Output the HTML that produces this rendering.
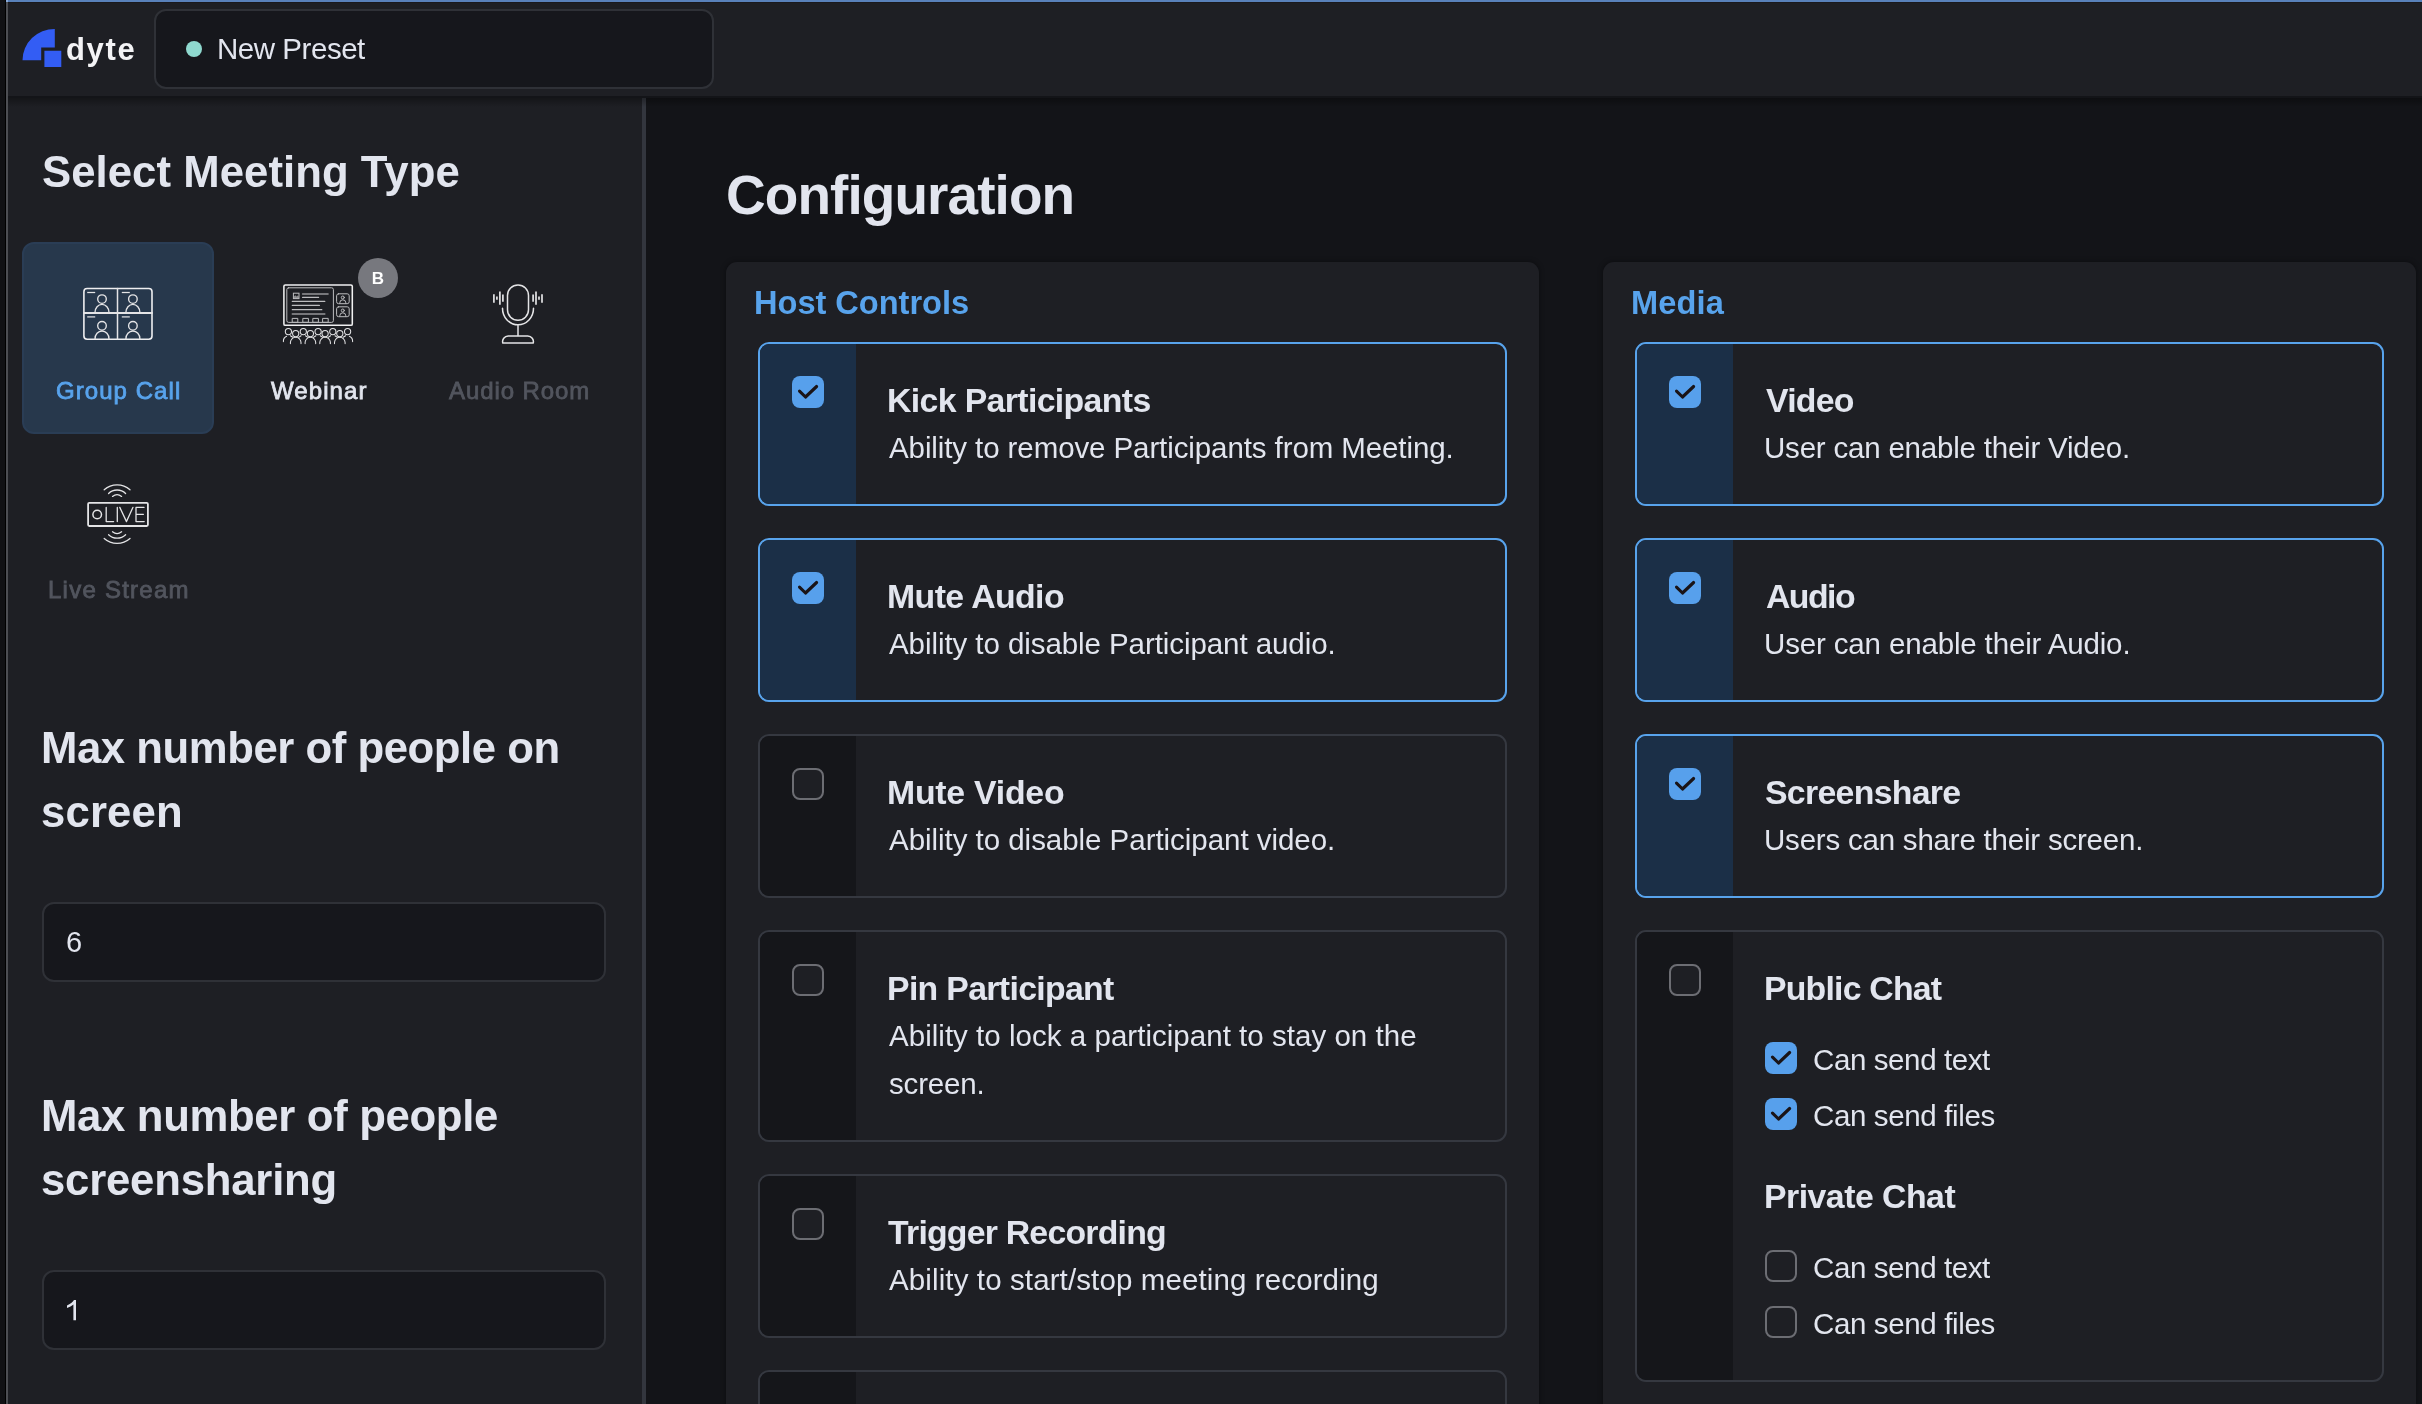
<!DOCTYPE html>
<html lang="en"><head><meta charset="utf-8"><title>New Preset</title>
<style>

html,body{margin:0;padding:0;width:2422px;height:1404px;overflow:hidden;}
#root{position:absolute;left:0;top:0;width:2422px;height:1404px;overflow:hidden;background:#131418;}
body{width:2422px;height:1404px;overflow:hidden;position:relative;background:#131418;font-family:"Liberation Sans",sans-serif;}
.a{position:absolute;box-sizing:border-box;}
.t{position:absolute;white-space:nowrap;font-family:"Liberation Sans",sans-serif;will-change:transform;}
.card{position:absolute;box-sizing:border-box;border:2px solid #353840;border-radius:11px;overflow:hidden;background:#1e1f24;}
.card.on{border-color:#58a3ec;}
.card .s{position:absolute;left:0;top:0;bottom:0;width:96px;background:#15161a;}
.card.on .s{background:#1b2f47;}
.cb{position:absolute;box-sizing:border-box;width:32px;height:32px;border-radius:8px;border:2px solid #6c6d73;background:#1e1f24;}
.cb.on{border:0;background:#57a0ec;}
.cb svg{position:absolute;left:0;top:0;display:block;}
.inp{position:absolute;box-sizing:border-box;border:2px solid #2f3137;border-radius:12px;background:#16171c;}

</style></head>
<body>
<div id="root">
<div class="a" style="left:8px;top:98px;width:634px;height:1306px;background:#1e1f24;"></div>
<div class="a" style="left:642px;top:98px;width:4px;height:1306px;background:#33363e;"></div>
<div class="a" style="left:726px;top:262px;width:813px;height:1200px;background:#1e1f24;border-radius:11px;box-shadow:0 0 5px 1px rgba(0,0,0,.3);"></div>
<div class="a" style="left:1602.5px;top:262px;width:813.5px;height:1200px;background:#1e1f24;border-radius:11px;box-shadow:0 0 5px 1px rgba(0,0,0,.3);"></div>
<div class="a" style="left:8px;top:0px;width:2414px;height:96px;background:#1e1f24;"></div>
<div class="a" style="left:8px;top:98px;width:2414px;height:9px;background:linear-gradient(rgba(0,0,0,.32),rgba(0,0,0,0));"></div>
<div class="a" style="left:6px;top:0px;width:2416px;height:2px;background:#5981ba;"></div>
<div class="a" style="left:8px;top:2px;width:2414px;height:1px;background:#1a191d;"></div>
<div class="a" style="left:6px;top:0px;width:2px;height:2px;background:#8aaad9;"></div>
<div class="a" style="left:0px;top:0px;width:5px;height:1404px;background:#111114;"></div>
<div class="a" style="left:5px;top:0px;width:1px;height:1404px;background:#000;"></div>
<div class="a" style="left:6px;top:2px;width:2px;height:1402px;background:#4d4e53;"></div>
<div class="inp" style="left:154px;top:9px;width:560px;height:80px"></div>
<div class="a" style="left:186px;top:41px;width:16px;height:16px;background:#8fd9cf;border-radius:50%;"></div>
<svg class="a" style="left:20px;top:26px" width="46" height="44" viewBox="20 26 46 44"><path fill="#335df4" d="M22.5 60.3A32.3 31.4 0 0 1 54.8 28.9V47.5H41.2V60.3zM44.4 50.7h16.9v16.4H44.4z"/></svg>
<div class="a" style="left:22px;top:242px;width:192px;height:192px;background:#27384c;border-radius:12px;border:2px solid #2a3d55;"></div>
<svg class="a" style="left:0;top:0" width="660" height="700" viewBox="0 0 660 700" fill="none" stroke="#e4e4e6" stroke-width="1.35" stroke-linecap="round" stroke-linejoin="round">
<rect x="83.9" y="288.5" width="68.1" height="50.8" rx="3.2" stroke-width="1.6" stroke="#eeeef0"/>
<path d="M117.5 288.5V339.3" stroke-width="1.5"/><path d="M84 313H152" stroke-width="1.9"/>
<circle cx="102.00" cy="299.10" r="4.3"/><path d="M95.00 312.60A7.00 8.20 0 0 1 109.00 312.60"/>
<circle cx="102.00" cy="325.80" r="4.3"/><path d="M95.00 338.90A7.00 7.90 0 0 1 109.00 338.90"/>
<circle cx="132.90" cy="299.10" r="4.3"/><path d="M125.90 312.60A7.00 8.20 0 0 1 139.90 312.60"/>
<circle cx="132.90" cy="325.80" r="4.3"/><path d="M125.90 338.90A7.00 7.90 0 0 1 139.90 338.90"/>
<path d="M87.2 292.5h8" stroke-width="1.25" stroke-linecap="butt"/>
<path d="M87.2 316.9h8" stroke-width="1.25" stroke-linecap="butt"/>
<path d="M121.8 292.5h8" stroke-width="1.25" stroke-linecap="butt"/>
<path d="M121.8 316.9h8" stroke-width="1.25" stroke-linecap="butt"/>
<rect x="283.9" y="284.9" width="68.4" height="40.4" rx="1.4" stroke-width="1.55" stroke="#f0f0f1"/>
<g stroke-width="1" opacity="0.8">
<rect x="286.8" y="287.8" width="46.6" height="34.6" rx="1.8"/>
<rect x="293.4" y="293.2" width="5.6" height="5.4" stroke-linejoin="miter"/><path d="M293.6 298.4v-1.6l1.7-1.6 1.3 1.2 1-.8 1.2 1.2v1.6z" fill="#e4e4e6" fill-opacity=".7" stroke="none"/>
<path d="M302.6 294H328" stroke-width="1.6" opacity=".75"/>
<path d="M302.6 297.4H318.6M292.3 301.4H324.8M292.3 305.4H319.4M292.3 309.7H321.8" stroke-width="1.2"/>
<path d="M292.3 314.1H324.8" stroke-width="1.5" opacity=".75"/>
<rect x="292.6" y="318.4" width="5.2" height="3.9"/>
<rect x="303.2" y="318.4" width="5.2" height="3.9"/>
<rect x="313.2" y="318.4" width="5.2" height="3.9"/>
<rect x="323.0" y="318.4" width="5.2" height="3.9"/>
<rect x="336.6" y="293.8" width="12.6" height="9.9" rx="2"/>
<circle cx="342.8" cy="297.5" r="1.5"/><path d="M339.8 303.2v-.4a3 3 0 0 1 6 0v.4"/>
<rect x="336.6" y="306.8" width="12.6" height="9.9" rx="2"/>
<circle cx="342.8" cy="310.5" r="1.5"/><path d="M339.8 316.2v-.4a3 3 0 0 1 6 0v.4"/>
</g>
<g stroke-width="1.05">
<circle cx="288.4" cy="331.6" r="3.1"/>
<circle cx="303.3" cy="331.6" r="3.1"/>
<circle cx="318.1" cy="331.6" r="3.1"/>
<circle cx="332.8" cy="331.6" r="3.1"/>
<circle cx="347.6" cy="331.6" r="3.1"/>
<path d="M283.4 341.6v-.6a5.2 5.2 0 0 1 3.2-4.8M290.4 336.2"/>
<path d="M352.6 341.6v-.6a5.2 5.2 0 0 0-3.2-4.8"/>
<path d="M298.7 337.4l2.4-1.6M307.9 337.4l-2.4-1.6"/>
<path d="M313.5 337.4l2.4-1.6M322.7 337.4l-2.4-1.6"/>
<path d="M328.2 337.4l2.4-1.6M337.4 337.4l-2.4-1.6"/>
<path d="M292.8 337.2l-2.4-1.4M343.2 337.2l2.4-1.4"/>
<circle cx="295.7" cy="333.6" r="3.1"/>
<path d="M290.4 343.6v-1a5.3 5.3 0 0 1 10.6 0v1"/>
<circle cx="310.4" cy="333.6" r="3.1"/>
<path d="M305.1 343.6v-1a5.3 5.3 0 0 1 10.6 0v1"/>
<circle cx="325.1" cy="333.6" r="3.1"/>
<path d="M319.8 343.6v-1a5.3 5.3 0 0 1 10.6 0v1"/>
<circle cx="339.8" cy="333.6" r="3.1"/>
<path d="M334.5 343.6v-1a5.3 5.3 0 0 1 10.6 0v1"/>
</g>
<g stroke-width="1.5">
<rect x="507.5" y="284.9" width="21" height="35.4" rx="10.5"/>
<path d="M502.5 308.2a15.5 16.6 0 0 0 31 0M518 325.2V335.6"/>
<path d="M502.8 343.1a5.6 5.6 0 0 1 5.4-7.1h19.6a5.6 5.6 0 0 1 5.4 7.1z"/>
</g><g stroke-width="1.7" stroke-linecap="butt">
<path d="M493.9 294.2V302.8"/>
<path d="M496.9 296.6V299.8"/>
<path d="M499.9 291.6V304.7"/>
<path d="M502.9 294.6V301.8"/>
<path d="M533.1 294.6V301.8"/>
<path d="M536.0 291.6V304.7"/>
<path d="M539.0 296.6V299.8"/>
<path d="M542.0 294.2V302.8"/>
</g>
<rect x="88.1" y="502.8" width="59.8" height="23.2" rx="1.2" stroke-width="1.8"/>
<g stroke-width="1.3">
<circle cx="97.2" cy="514.5" r="4.3" stroke-width="1.5"/>
<path d="M106.2 507.4V521.6H113.6M117.3 507.4V521.6M119.8 507.4L126.5 521.6L132.9 507.4M144 507.4H136V521.6H144.2M136 514.3H143.4"/>
<path d="M104.2 489.8A19.43 19.43 0 0 1 130.0 489.8M108.6 493.5A12.07 12.07 0 0 1 125.6 493.5M112.5 496.4A7.27 7.27 0 0 1 121.6 496.4"/>
<path d="M104.2 538.4A19.43 19.43 0 0 0 130.0 538.4M108.6 534.7A12.07 12.07 0 0 0 125.6 534.7M112.5 531.8A7.27 7.27 0 0 0 121.6 531.8"/>
</g>
</svg>
<div class="a" style="left:358px;top:258px;width:40px;height:40px;border-radius:50%;background:#77787e;color:#fff;font-weight:700;font-size:17px;line-height:41.6px;text-align:center;will-change:transform;">B</div>
<div class="inp" style="left:42px;top:902px;width:564px;height:80px"></div>
<div class="inp" style="left:42px;top:1270px;width:564px;height:80px"></div>
<svg class="a" style="left:60px;top:1296px" width="24" height="30" viewBox="60 1296 24 30"><path fill="#e2e5ee" d="M76 1300.1V1320.3H73.4V1304.5C71.7 1306 69.5 1307.2 67 1307.9V1305.5C70.2 1304.2 72.8 1302.2 74 1300.1Z"/></svg>
<div class="card on" style="left:758px;top:342px;width:749px;height:164px"><div class="s"></div><div class="cb on" style="left:32px;top:32px"><svg width="32" height="32" viewBox="0 0 32 32"><path fill="none" stroke="#1a1417" stroke-width="3.1" stroke-linecap="round" stroke-linejoin="round" d="M7.5 15.1L13.5 21L24.6 10.5"/></svg></div></div>
<div class="card on" style="left:758px;top:538px;width:749px;height:164px"><div class="s"></div><div class="cb on" style="left:32px;top:32px"><svg width="32" height="32" viewBox="0 0 32 32"><path fill="none" stroke="#1a1417" stroke-width="3.1" stroke-linecap="round" stroke-linejoin="round" d="M7.5 15.1L13.5 21L24.6 10.5"/></svg></div></div>
<div class="card" style="left:758px;top:734px;width:749px;height:164px"><div class="s"></div><div class="cb" style="left:32px;top:32px"></div></div>
<div class="card" style="left:758px;top:930px;width:749px;height:212px"><div class="s"></div><div class="cb" style="left:32px;top:32px"></div></div>
<div class="card" style="left:758px;top:1174px;width:749px;height:164px"><div class="s"></div><div class="cb" style="left:32px;top:32px"></div></div>
<div class="card" style="left:758px;top:1370px;width:749px;height:164px"><div class="s"></div><div class="cb" style="left:32px;top:32px"></div></div>
<div class="card on" style="left:1635px;top:342px;width:749px;height:164px"><div class="s"></div><div class="cb on" style="left:32px;top:32px"><svg width="32" height="32" viewBox="0 0 32 32"><path fill="none" stroke="#1a1417" stroke-width="3.1" stroke-linecap="round" stroke-linejoin="round" d="M7.5 15.1L13.5 21L24.6 10.5"/></svg></div></div>
<div class="card on" style="left:1635px;top:538px;width:749px;height:164px"><div class="s"></div><div class="cb on" style="left:32px;top:32px"><svg width="32" height="32" viewBox="0 0 32 32"><path fill="none" stroke="#1a1417" stroke-width="3.1" stroke-linecap="round" stroke-linejoin="round" d="M7.5 15.1L13.5 21L24.6 10.5"/></svg></div></div>
<div class="card on" style="left:1635px;top:734px;width:749px;height:164px"><div class="s"></div><div class="cb on" style="left:32px;top:32px"><svg width="32" height="32" viewBox="0 0 32 32"><path fill="none" stroke="#1a1417" stroke-width="3.1" stroke-linecap="round" stroke-linejoin="round" d="M7.5 15.1L13.5 21L24.6 10.5"/></svg></div></div>
<div class="card" style="left:1635px;top:930px;width:749px;height:452px"><div class="s"></div><div class="cb" style="left:32px;top:32px"></div></div>
<div class="cb on" style="left:1765px;top:1042px"><svg width="32" height="32" viewBox="0 0 32 32"><path fill="none" stroke="#1a1417" stroke-width="3.1" stroke-linecap="round" stroke-linejoin="round" d="M7.5 15.1L13.5 21L24.6 10.5"/></svg></div>
<div class="cb on" style="left:1765px;top:1098px"><svg width="32" height="32" viewBox="0 0 32 32"><path fill="none" stroke="#1a1417" stroke-width="3.1" stroke-linecap="round" stroke-linejoin="round" d="M7.5 15.1L13.5 21L24.6 10.5"/></svg></div>
<div class="cb" style="left:1765px;top:1250px"></div>
<div class="cb" style="left:1765px;top:1306px"></div>
<span class="t" id="dyte" style="top:26.96px;font-size:31px;line-height:46px;color:#f3f3f5;font-weight:700;letter-spacing:1.660px;left:66.33px;">dyte</span>
<span class="t" id="preset" style="top:26.78px;font-size:29.5px;line-height:44px;color:#e2e5ee;letter-spacing:-0.461px;left:217.38px;">New Preset</span>
<span class="t" id="selmt" style="top:139.36px;font-size:43.7px;line-height:65px;color:#e2e5ee;font-weight:700;letter-spacing:0.055px;left:42.34px;">Select Meeting Type</span>
<span class="t" id="gc" style="top:372.58px;font-size:24px;line-height:36px;color:#58a3ec;letter-spacing:1.055px;left:56.09px;-webkit-text-stroke:0.8px currentColor;">Group Call</span>
<span class="t" id="web" style="top:372.58px;font-size:24px;line-height:36px;color:#e2e5ee;letter-spacing:1.094px;left:270.59px;-webkit-text-stroke:0.8px currentColor;">Webinar</span>
<span class="t" id="ar" style="top:372.58px;font-size:24px;line-height:36px;color:#52555e;letter-spacing:0.917px;left:448.60px;-webkit-text-stroke:0.8px currentColor;">Audio Room</span>
<span class="t" id="ls" style="top:572.48px;font-size:24px;line-height:36px;color:#52555e;letter-spacing:1.249px;left:47.73px;-webkit-text-stroke:0.8px currentColor;">Live Stream</span>
<span class="t" id="max1a" style="top:715.16px;font-size:43.7px;line-height:65px;color:#e2e5ee;font-weight:700;letter-spacing:-0.450px;left:41.18px;">Max number of people on</span>
<span class="t" id="max1b" style="top:778.86px;font-size:43.7px;line-height:65px;color:#e2e5ee;font-weight:700;letter-spacing:0.171px;left:41.36px;">screen</span>
<span class="t" id="max2a" style="top:1083.16px;font-size:43.7px;line-height:65px;color:#e2e5ee;font-weight:700;letter-spacing:-0.333px;left:41.18px;">Max number of people</span>
<span class="t" id="max2b" style="top:1146.86px;font-size:43.7px;line-height:65px;color:#e2e5ee;font-weight:700;letter-spacing:-0.201px;left:41.36px;">screensharing</span>
<span class="t" id="in1" style="top:920.85px;font-size:29px;line-height:43px;color:#e2e5ee;letter-spacing:0.000px;left:65.83px;">6</span>
<span class="t" id="config" style="top:153.98px;font-size:54.9px;line-height:82px;color:#e2e5ee;font-weight:700;letter-spacing:-0.892px;left:725.75px;">Configuration</span>
<span class="t" id="hostc" style="top:278.50px;font-size:32.6px;line-height:48px;color:#58a3ec;font-weight:700;letter-spacing:-0.021px;left:753.82px;">Host Controls</span>
<span class="t" id="media" style="top:278.50px;font-size:32.6px;line-height:48px;color:#58a3ec;font-weight:700;letter-spacing:0.111px;left:1630.62px;">Media</span>
<span class="t" id="h1t" style="top:375.29px;font-size:33.8px;line-height:50px;color:#e2e5ee;font-weight:700;letter-spacing:-0.625px;left:887.14px;">Kick Participants</span>
<span class="t" id="h1d" style="top:425.78px;font-size:29.5px;line-height:44px;color:#e2e5ee;letter-spacing:-0.097px;left:888.94px;">Ability to remove Participants from Meeting.</span>
<span class="t" id="h2t" style="top:571.29px;font-size:33.8px;line-height:50px;color:#e2e5ee;font-weight:700;letter-spacing:-0.571px;left:887.14px;">Mute Audio</span>
<span class="t" id="h2d" style="top:621.78px;font-size:29.5px;line-height:44px;color:#e2e5ee;letter-spacing:-0.072px;left:888.94px;">Ability to disable Participant audio.</span>
<span class="t" id="h3t" style="top:767.29px;font-size:33.8px;line-height:50px;color:#e2e5ee;font-weight:700;letter-spacing:-0.231px;left:887.14px;">Mute Video</span>
<span class="t" id="h3d" style="top:817.78px;font-size:29.5px;line-height:44px;color:#e2e5ee;letter-spacing:-0.039px;left:888.94px;">Ability to disable Participant video.</span>
<span class="t" id="h4t" style="top:963.29px;font-size:33.8px;line-height:50px;color:#e2e5ee;font-weight:700;letter-spacing:-0.662px;left:887.14px;">Pin Participant</span>
<span class="t" id="h4d" style="top:1013.78px;font-size:29.5px;line-height:44px;color:#e2e5ee;letter-spacing:0.028px;left:888.94px;">Ability to lock a participant to stay on the</span>
<span class="t" id="h4e" style="top:1061.78px;font-size:29.5px;line-height:44px;color:#e2e5ee;letter-spacing:-0.173px;left:888.78px;">screen.</span>
<span class="t" id="h5t" style="top:1207.29px;font-size:33.8px;line-height:50px;color:#e2e5ee;font-weight:700;letter-spacing:-0.777px;left:888.42px;">Trigger Recording</span>
<span class="t" id="h5d" style="top:1257.78px;font-size:29.5px;line-height:44px;color:#e2e5ee;letter-spacing:0.116px;left:888.94px;">Ability to start/stop meeting recording</span>
<span class="t" id="m1t" style="top:375.29px;font-size:33.8px;line-height:50px;color:#e2e5ee;font-weight:700;letter-spacing:-0.768px;left:1766.17px;">Video</span>
<span class="t" id="m1d" style="top:425.78px;font-size:29.5px;line-height:44px;color:#e2e5ee;letter-spacing:-0.206px;left:1764.12px;">User can enable their Video.</span>
<span class="t" id="m2t" style="top:571.29px;font-size:33.8px;line-height:50px;color:#e2e5ee;font-weight:700;letter-spacing:-1.543px;left:1765.56px;">Audio</span>
<span class="t" id="m2d" style="top:621.78px;font-size:29.5px;line-height:44px;color:#e2e5ee;letter-spacing:-0.150px;left:1764.12px;">User can enable their Audio.</span>
<span class="t" id="m3t" style="top:767.29px;font-size:33.8px;line-height:50px;color:#e2e5ee;font-weight:700;letter-spacing:-0.679px;left:1765.43px;">Screenshare</span>
<span class="t" id="m3d" style="top:817.78px;font-size:29.5px;line-height:44px;color:#e2e5ee;letter-spacing:-0.212px;left:1764.12px;">Users can share their screen.</span>
<span class="t" id="m4t" style="top:963.29px;font-size:33.8px;line-height:50px;color:#e2e5ee;font-weight:700;letter-spacing:-0.783px;left:1764.14px;">Public Chat</span>
<span class="t" id="m4a" style="top:1037.78px;font-size:29.5px;line-height:44px;color:#e2e5ee;letter-spacing:-0.393px;left:1813.30px;">Can send text</span>
<span class="t" id="m4b" style="top:1093.78px;font-size:29.5px;line-height:44px;color:#e2e5ee;letter-spacing:-0.361px;left:1813.30px;">Can send files</span>
<span class="t" id="m5t" style="top:1171.29px;font-size:33.8px;line-height:50px;color:#e2e5ee;font-weight:700;letter-spacing:-0.506px;left:1764.14px;">Private Chat</span>
<span class="t" id="m5a" style="top:1245.78px;font-size:29.5px;line-height:44px;color:#e2e5ee;letter-spacing:-0.393px;left:1813.30px;">Can send text</span>
<span class="t" id="m5b" style="top:1301.78px;font-size:29.5px;line-height:44px;color:#e2e5ee;letter-spacing:-0.361px;left:1813.30px;">Can send files</span>
</div>
</body></html>
